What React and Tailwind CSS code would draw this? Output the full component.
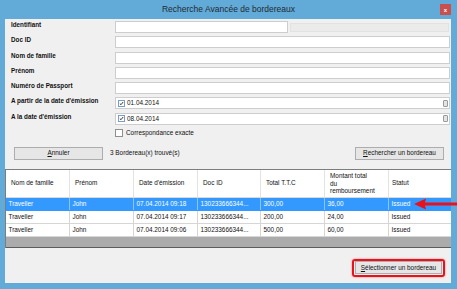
import React from 'react';

const rows = [
    { nom: 'Traveller', prenom: 'John', date: '07.04.2014 09:18', doc: '130233666344...', total: '300,00', montant: '36,00', statut: 'Issued', selected: true },
    { nom: 'Traveller', prenom: 'John', date: '07.04.2014 09:17', doc: '130233666344...', total: '200,00', montant: '24,00', statut: 'Issued' },
    { nom: 'Traveller', prenom: 'John', date: '07.04.2014 09:06', doc: '130233666344...', total: '500,00', montant: '60,00', statut: 'Issued' },
];

const cols = 'grid grid-cols-[64px_64px_64px_63px_64px_64px_1fr]';

const Check = () => (
    <svg width="7" height="7" viewBox="0 0 7 7">
        <path d="M1.2 3.6 L2.8 5.2 L5.8 1.4" fill="none" stroke="#1a1a1a" strokeWidth="1.2" />
    </svg>
);

const FieldRow = ({ label, children }) => (
    <div className="flex h-[12px]">
        <div className="w-[110px] pl-[6px] text-[6.3px] font-bold leading-[8px] whitespace-nowrap">{label}</div>
        <div className="flex-1 flex mr-[1px]">{children}</div>
    </div>
);

const Input = ({ className = 'flex-1', children }) => (
    <div className={`${className} h-full bg-white border border-[#cdcdcd] flex items-center`}>{children}</div>
);

const DateInput = ({ value }) => (
    <Input>
        <div className="ml-[2px] w-[7px] h-[7px] border border-[#7a9cc8] bg-white flex items-center justify-center">
            <Check />
        </div>
        <span className="ml-[2px] text-[6.4px] leading-none">{value}</span>
        <div className="ml-auto mr-[1px] w-[5px] h-[7px] border border-[#9a9a9a] rounded-[1px] bg-[#e4e4e4]" />
    </Input>
);

const Button = ({ children, className = '' }) => (
    <div className={`h-[13px] bg-[#e6e6e6] border border-[#adadad] flex items-center justify-center text-[6.4px] leading-none ${className}`}>
        {children}
    </div>
);

const App = () => {
    return (
        <div className="relative w-[457px] h-[289px] bg-[#62aad8] flex flex-col overflow-hidden text-[#111] [font-family:'Liberation_Sans',Arial,sans-serif]">
            <div className="h-[19px] grid grid-cols-[1fr_auto_1fr] items-center">
                <div />
                <div className="text-[8.5px] leading-none text-[#1f2a33]">Recherche Avancée de bordereaux</div>
                <div className="flex justify-end pr-[6px]">
                    <div className="w-[11px] h-[11px] bg-[#c9504d] flex items-center justify-center text-white text-[6px] font-bold leading-none">x</div>
                </div>
            </div>

            <div className="ml-[5px] mr-[6px] h-[264px] bg-[#f0f0f0] flex flex-col">
                <div className="pt-[2px] flex flex-col gap-[3.3px]">
                    <FieldRow label="Identifiant">
                        <Input className="w-[173px]" />
                        <div className="ml-[2px] mt-[2px] w-[159px] h-[9px] bg-[#ebebeb] border border-[#e2e2e2]" />
                    </FieldRow>
                    <FieldRow label="Doc ID"><Input /></FieldRow>
                    <FieldRow label="Nom de famille"><Input /></FieldRow>
                    <FieldRow label="Prénom"><Input /></FieldRow>
                    <FieldRow label="Numéro de Passport"><Input /></FieldRow>
                    <FieldRow label="A partir de la date d'émission"><DateInput value="01.04.2014" /></FieldRow>
                    <FieldRow label="A la date d'émission"><DateInput value="08.04.2014" /></FieldRow>
                </div>

                <div className="mt-[4px] h-[8px] pl-[110px] flex items-center">
                    <div className="w-[8px] h-[8px] border border-[#8f8f8f] bg-white" />
                    <span className="ml-[3px] text-[6.4px] leading-none">Correspondance exacte</span>
                </div>

                <div className="mt-[10px] flex items-center">
                    <Button className="ml-[9px] w-[89px]"><span><span className="underline">A</span>nnuler</span></Button>
                    <span className="ml-[7px] text-[6.4px] leading-none">3 Bordereau(x) trouvé(s)</span>
                    <Button className="ml-auto mr-[7px] w-[89px]"><span><span className="underline">R</span>echercher un bordereau</span></Button>
                </div>

                <div className="mt-[9px] border-t border-l border-[#7d7d7d] flex flex-col">
                    <div className={`${cols} h-[28px] bg-white border-b border-[#d9d9d9]`}>
                        {['Nom de famille', 'Prénom', "Date d'émission", 'Doc ID', 'Total T.T.C'].map((h) => (
                            <div key={h} className="px-[5px] flex items-center text-[6.4px] leading-none border-r border-[#e3e3e3]">{h}</div>
                        ))}
                        <div className="px-[5px] flex items-center text-[6.4px] leading-[7.5px] border-r border-[#e3e3e3]">
                            <span>Montant total<br />du<br />remboursement</span>
                        </div>
                        <div className="px-[3px] flex items-center text-[6.4px] leading-none">Statut</div>
                    </div>
                    {rows.map((r, i) => (
                        <div
                            key={i}
                            className={`${cols} h-[13px] text-[6.4px] leading-none border-b ${r.selected ? 'bg-[#3399ff] text-white border-[#3399ff]' : 'bg-white border-[#d6d6d6]'}`}
                        >
                            {[r.nom, r.prenom, r.date, r.doc, r.total, r.montant, r.statut].map((v, j) => (
                                <div
                                    key={j}
                                    className={`px-[2.5px] flex items-center whitespace-nowrap overflow-hidden ${j < 6 ? (r.selected ? 'border-r border-[#8cc4fb]' : 'border-r border-[#d6d6d6]') : ''}`}
                                >
                                    {v}
                                </div>
                            ))}
                        </div>
                    ))}
                    <div className="h-[11px] bg-[#ababab] border-b border-[#5c5c5c]" />
                </div>

                <div className="mt-[11px] flex justify-end mr-[6px]">
                    <div className="w-[93px] h-[18px] border-2 border-[#e8121c] rounded-[3px] flex items-center justify-center shadow-[0_0_2px_rgba(232,18,28,0.6)]">
                        <Button className="w-[87px] h-[12px]"><span><span className="underline">S</span>électionner un bordereau</span></Button>
                    </div>
                </div>
            </div>

            <svg className="absolute left-[412px] top-[198px]" width="45" height="12" viewBox="0 0 45 12">
                <path d="M2 6 L14 0.5 L13 4.6 L45 4.6 L45 7.4 L13 7.4 L14 11.5 Z" fill="#e8121c" />
            </svg>
        </div>
    );
};

export default App;
